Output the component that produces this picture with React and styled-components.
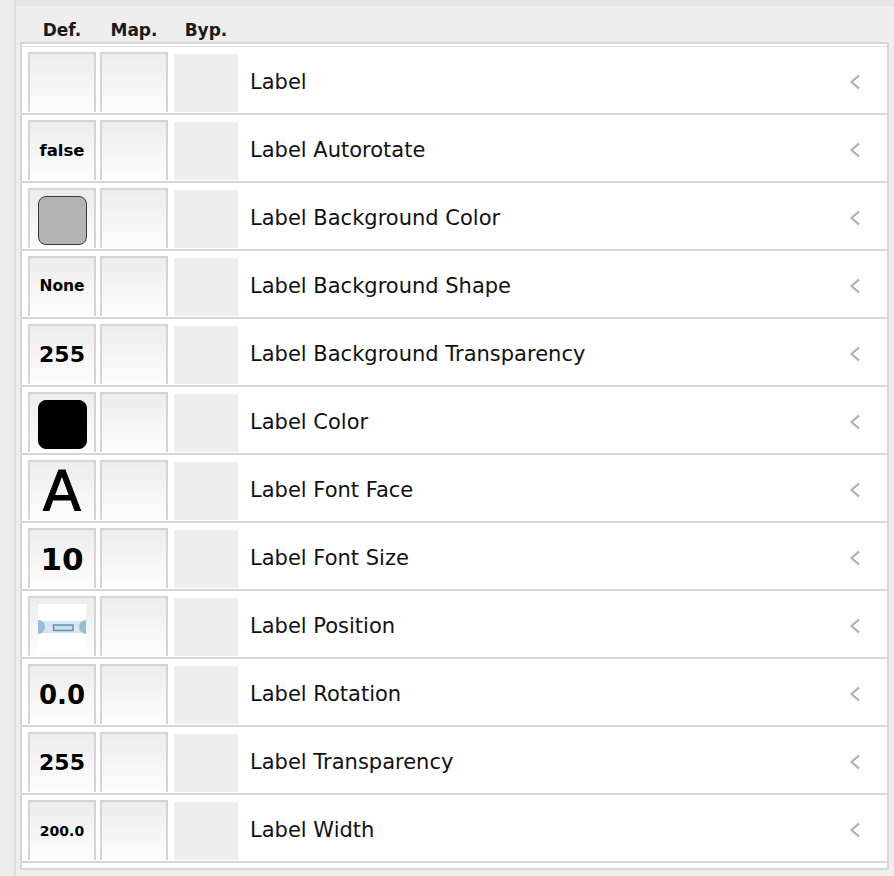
import React from 'react';
import styled, { createGlobalStyle } from 'styled-components';

const GlobalStyle = createGlobalStyle`
  html, body {
    margin: 0;
    padding: 0;
    background: #ececec;
  }
  * {
    box-sizing: border-box;
  }
`;

const Page = styled.div`
  display: flex;
  width: 894px;
  height: 876px;
  overflow: hidden;
  font-family: 'DejaVu Sans', 'Liberation Sans', sans-serif;
  background: #ececec;
`;

const Gutter = styled.div`
  width: 16px;
  flex-shrink: 0;
  background: #ececec;
  border-right: 2px solid #dcdcdc;
`;

const Panel = styled.div`
  flex: 1;
  display: flex;
  flex-direction: column;
  background: #eeeeee;
  border-top: 6px solid #e6e6e6;
  padding: 0 5px 0 4px;
`;

const HeaderRow = styled.div`
  height: 36px;
  display: flex;
  align-items: flex-end;
  gap: 4px;
  padding: 0 0 2px 8px;
`;

const HeaderCol = styled.div`
  width: 68px;
  text-align: center;
  font-size: 17px;
  font-weight: bold;
  color: #1a1a1a;
`;

const Table = styled.div`
  background: #ffffff;
  border: 2px solid #d6d6d6;
  padding-top: 2px;
  padding-bottom: 5px;
`;

const TableBody = styled.div`
  border-top: 1px solid #e0e0e0;
`;

const Row = styled.div`
  height: 68px;
  display: flex;
  align-items: center;
  gap: 4px;
  padding: 5px 26px 1px 6px;
  border-bottom: 2px solid #d6d6d6;
`;

const Cell = styled.div`
  width: 68px;
  height: 60px;
  flex-shrink: 0;
  display: flex;
  align-items: center;
  justify-content: center;
  border: 2px solid #d4d4d4;
  border-bottom: none;
  background: linear-gradient(to bottom, #ececec, #fdfdfd);
  color: #000;
  font-weight: ${(p) => (p.$light ? 'normal' : 'bold')};
  font-size: ${(p) => p.$size || 16}px;
  line-height: 1;
  -webkit-text-stroke: ${(p) => (p.$light ? '1px #000' : '0')};
`;

const BypassCell = styled.div`
  width: 68px;
  height: 60px;
  flex-shrink: 0;
  border: 2px solid transparent;
  border-bottom: none;
  background: #eeeeee;
  background-clip: padding-box;
`;

const Swatch = styled.div`
  width: 49px;
  height: 49px;
  margin-top: 2px;
  border-radius: 8px;
  background: ${(p) => p.$color};
  border: 1px solid ${(p) => p.$edge};
`;

const Name = styled.div`
  margin-left: 6px;
  font-size: 21px;
  color: #111111;
  white-space: nowrap;
`;

const Chevron = styled.svg`
  margin-left: auto;
  width: 12px;
  height: 16px;
`;

const PositionIcon = () => (
  <svg width="48" height="48" viewBox="0 0 48 48" style={{ marginTop: 1 }}>
    <rect x="0" y="0" width="48" height="48" fill="#ffffff" />
    <rect x="0" y="17" width="48" height="12" fill="#d8e6f1" />
    <circle cx="0" cy="23" r="7" fill="#97bdd4" />
    <circle cx="48" cy="23" r="7" fill="#97bdd4" />
    <rect x="15.5" y="21" width="19.5" height="5.5" fill="#c9dcec" stroke="#5d8fb4" strokeWidth="1.4" />
  </svg>
);

const rows = [
  { name: 'Label', def: null },
  { name: 'Label Autorotate', def: 'false', size: 16.5 },
  { name: 'Label Background Color', swatch: ['#b4b4b4', '#3a3a3a'] },
  { name: 'Label Background Shape', def: 'None', size: 15.5 },
  { name: 'Label Background Transparency', def: '255', size: 22 },
  { name: 'Label Color', swatch: ['#000000', '#000000'] },
  { name: 'Label Font Face', def: 'A', size: 56, light: true },
  { name: 'Label Font Size', def: '10', size: 31 },
  { name: 'Label Position', position: true },
  { name: 'Label Rotation', def: '0.0', size: 26 },
  { name: 'Label Transparency', def: '255', size: 22 },
  { name: 'Label Width', def: '200.0', size: 14 },
];

const App = () => {
  return (
    <>
      <GlobalStyle />
      <Page>
        <Gutter />
        <Panel>
          <HeaderRow>
            <HeaderCol>Def.</HeaderCol>
            <HeaderCol>Map.</HeaderCol>
            <HeaderCol>Byp.</HeaderCol>
          </HeaderRow>
          <Table>
            <TableBody>
              {rows.map((r) => (
                <Row key={r.name}>
                  <Cell $size={r.size} $light={r.light}>
                    {r.def}
                    {r.swatch && <Swatch $color={r.swatch[0]} $edge={r.swatch[1]} />}
                    {r.position && <PositionIcon />}
                  </Cell>
                  <Cell />
                  <BypassCell />
                  <Name>{r.name}</Name>
                  <Chevron viewBox="0 0 12 16">
                    <polyline points="10,1.5 2.5,8 10,14.5" fill="none" stroke="#b0b0b0" strokeWidth="2.2" />
                  </Chevron>
                </Row>
              ))}
            </TableBody>
          </Table>
        </Panel>
      </Page>
    </>
  );
};

export default App;
